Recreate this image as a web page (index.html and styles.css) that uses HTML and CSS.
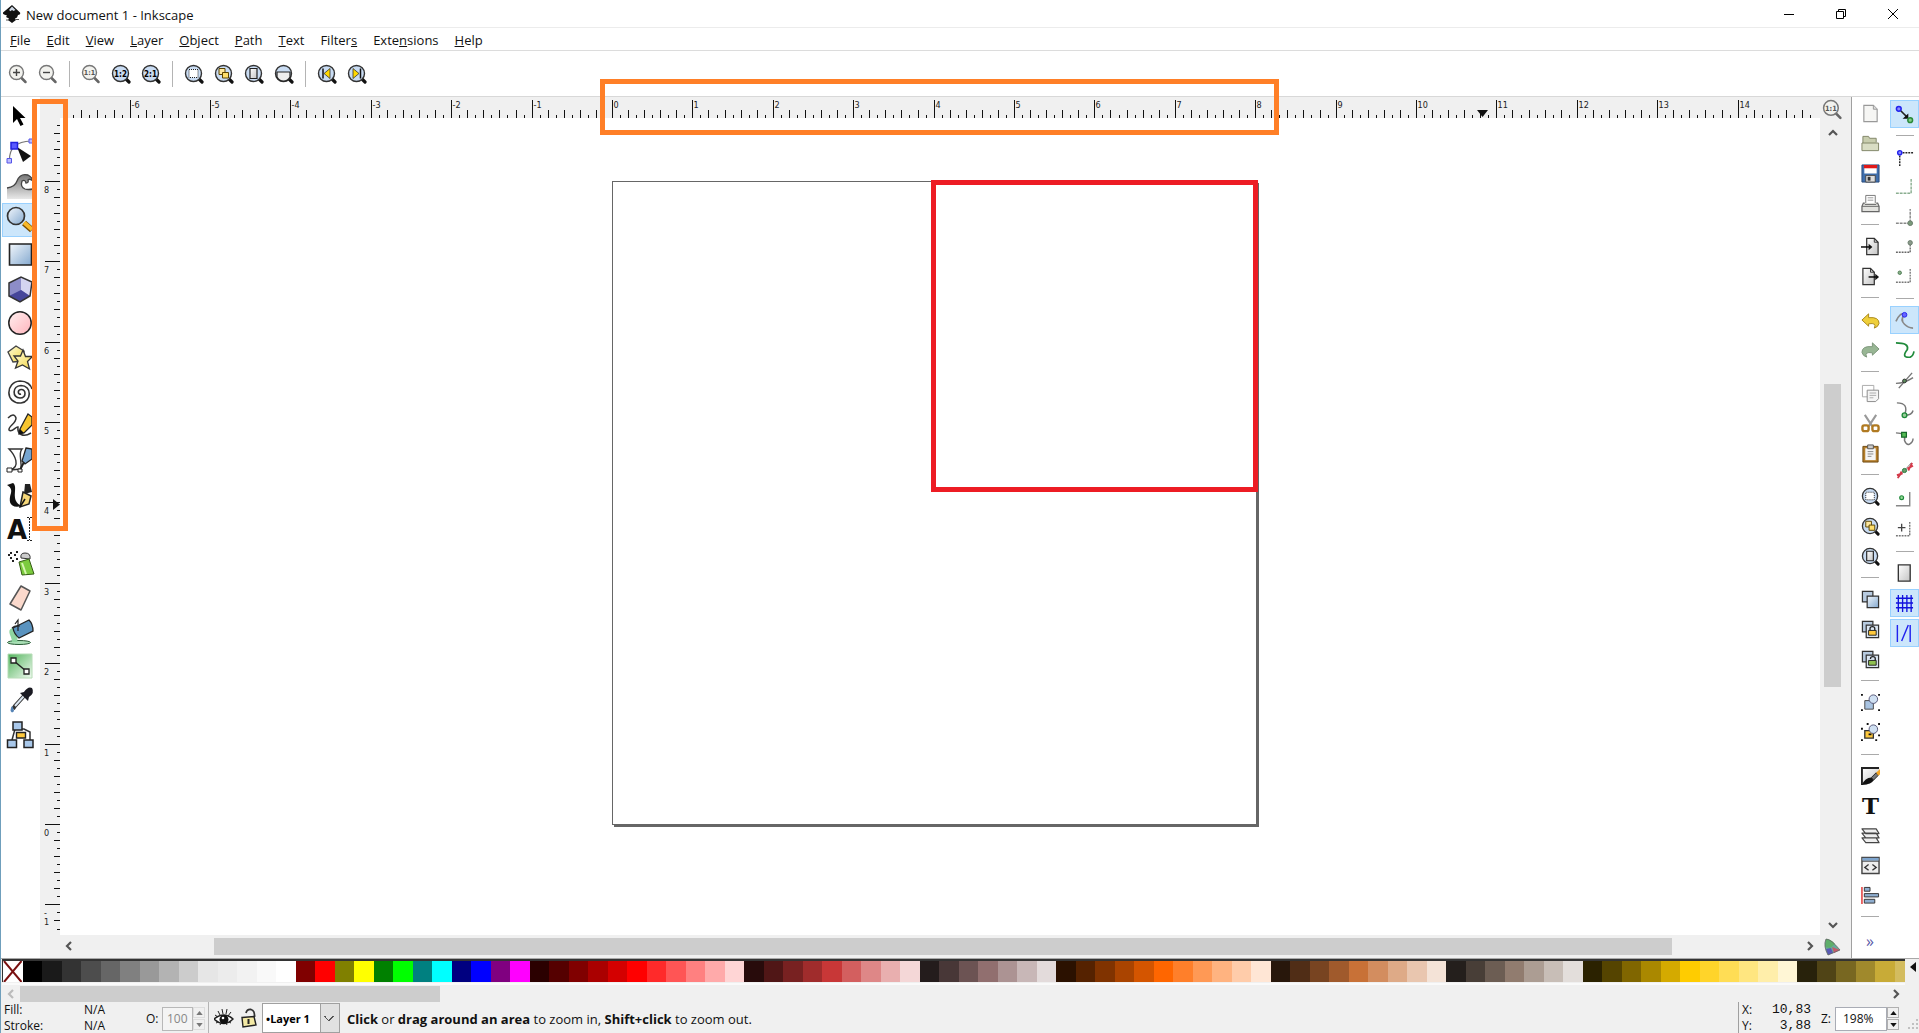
FILE: index.html
```
<!DOCTYPE html>
<html lang="en">
<head>
<meta charset="UTF-8">
<meta name="viewport" content="width=device-width, initial-scale=1.0">
<title>New document 1 - Inkscape</title>
<link rel="stylesheet" href="styles.css">
</head>
<body>

<!-- shared gradients and symbols -->
<svg class="defs" aria-hidden="true">
    <defs>
        <linearGradient id="blue" x1="0" y1="0" x2="1" y2="1"><stop offset="0" stop-color="#f2f7fc"/><stop offset="1" stop-color="#84a9cf"/></linearGradient>
        <linearGradient id="pink" x1="0" y1="0" x2="1" y2="1"><stop offset="0" stop-color="#fff0f0"/><stop offset="1" stop-color="#ffb4bc"/></linearGradient>
        <linearGradient id="yellow" x1="0" y1="0" x2="1" y2="1"><stop offset="0" stop-color="#fffbd8"/><stop offset="1" stop-color="#f2d84a"/></linearGradient>
        <linearGradient id="green" x1="0" y1="0" x2="1" y2="1"><stop offset="0" stop-color="#52b35c"/><stop offset="1" stop-color="#f0faf0"/></linearGradient>
        <linearGradient id="gray" x1="0" y1="0" x2="1" y2="1"><stop offset="0" stop-color="#ffffff"/><stop offset="1" stop-color="#c4c4c4"/></linearGradient>
        <linearGradient id="wave" x1="0" y1="0" x2="0" y2="1"><stop offset="0" stop-color="#777"/><stop offset="1" stop-color="#e8e8e8"/></linearGradient>
        <symbol id="lens" viewBox="0 0 20 20"><path d="M14 14l4 4" stroke="#111" stroke-width="3.2" stroke-linecap="round"/><circle cx="9.500" cy="9.500" r="8" fill="#c9dcf3" stroke="#333" stroke-width="1.400"/></symbol>
        <symbol id="lens-gray" viewBox="0 0 20 20"><path d="M13 13.500l4.500 4.500" stroke="#666" stroke-width="2.500" stroke-linecap="round"/><circle cx="8.500" cy="8.500" r="7" fill="#f2f2ee" stroke="#777" stroke-width="1.400"/></symbol>
        <symbol id="z-sel" viewBox="0 0 20 20"><use href="#lens"/><path d="M5 5.500h9v8h-9z" fill="#fff" stroke="#222" stroke-dasharray="1 1"/></symbol>
        <symbol id="z-draw" viewBox="0 0 20 20"><use href="#lens"/><path d="M5 4.500h6v6h-6z" fill="#ffe9a0" stroke="#5a4300"/><path d="M8.500 8.500h6v5.500h-6z" fill="#ffdf6b" stroke="#5a4300"/></symbol>
        <symbol id="z-page" viewBox="0 0 20 20"><use href="#lens"/><path d="M6 4.500h7v10h-7z" fill="url(#gray)" stroke="#222" stroke-width="1.200"/></symbol>
        <symbol id="z-width" viewBox="0 0 20 20"><use href="#lens"/><path d="M3 8h13v5q-2 4-6.500 4t-6.500-4z" fill="#eee" stroke="#222" stroke-width="1.200"/></symbol>
        <symbol id="chev" viewBox="0 0 10 10"><path d="M7 1L3 5l4 4" fill="none" stroke="currentColor" stroke-width="2.200"/></symbol>
    </defs>
</svg>

<div class="window">

    <header class="titlebar">
        <svg class="app-icon" viewBox="0 0 18 18"><path d="M9 0l8 7.500q1 2-2 2.500l-1 2.500-2 1 1 1.500-4 3-4-3 1-1.500-3-1.500 1-1.500-3-1q-2-1-1-2z" fill="#111"/><path d="M9 1.500l3.500 3.500-2 1-1.500-1-1.500 1.200-1.500-1.200z" fill="#cfd8e4"/><path d="M3 15h3M13 14.500h3" stroke="#555"/></svg>
        <span class="title">New document 1 - Inkscape</span>
        <div class="win-buttons">
            <button aria-label="Minimize"><svg viewBox="0 0 10 10"><path d="M0 5.500h10"/></svg></button>
            <button aria-label="Restore"><svg viewBox="0 0 10 10"><path d="M.5 2.500h7v7h-7zM2.500 2.500v-2h7v7h-2"/></svg></button>
            <button aria-label="Close"><svg viewBox="0 0 10 10"><path d="M0 0l10 10M10 0L0 10"/></svg></button>
        </div>
    </header>

    <nav class="menubar">
        <button><u>F</u>ile</button>
        <button><u>E</u>dit</button>
        <button><u>V</u>iew</button>
        <button><u>L</u>ayer</button>
        <button><u>O</u>bject</button>
        <button><u>P</u>ath</button>
        <button><u>T</u>ext</button>
        <button>Filter<u>s</u></button>
        <button>Exte<u>n</u>sions</button>
        <button><u>H</u>elp</button>
    </nav>

    <div class="toolbar">
        <button class="tb" aria-label="Zoom in"><svg viewBox="0 0 20 20"><use href="#lens-gray"/><path d="M5 8.500h7M8.500 5v7" stroke="#444" stroke-width="1.400"/></svg></button>
        <button class="tb" aria-label="Zoom out"><svg viewBox="0 0 20 20"><use href="#lens-gray"/><path d="M5 8.500h7" stroke="#444" stroke-width="1.400"/></svg></button>
        <i class="vsep"></i>
        <button class="tb" aria-label="Zoom 1:1"><svg viewBox="0 0 20 20"><use href="#lens-gray"/><text x="8.500" y="11">1:1</text></svg></button>
        <button class="tb" aria-label="Zoom 1:2"><svg viewBox="0 0 20 20"><use href="#lens"/><text class="dark" x="9.500" y="12.500">1:2</text></svg></button>
        <button class="tb" aria-label="Zoom 2:1"><svg viewBox="0 0 20 20"><use href="#lens"/><text class="dark" x="9.500" y="12.500">2:1</text></svg></button>
        <i class="vsep"></i>
        <button class="tb" aria-label="Zoom selection"><svg><use href="#z-sel"/></svg></button>
        <button class="tb" aria-label="Zoom drawing"><svg><use href="#z-draw"/></svg></button>
        <button class="tb" aria-label="Zoom page"><svg><use href="#z-page"/></svg></button>
        <button class="tb" aria-label="Zoom page width"><svg><use href="#z-width"/></svg></button>
        <i class="vsep"></i>
        <button class="tb" aria-label="Previous zoom"><svg viewBox="0 0 20 20"><use href="#lens"/><path d="M6 4.500v10" stroke="#111" stroke-width="1.500"/><path d="M13 4.500v10l-6-5z" fill="#ffd800" stroke="#333" stroke-width=".8"/></svg></button>
        <button class="tb" aria-label="Next zoom"><svg viewBox="0 0 20 20"><use href="#lens"/><path d="M13.500 4.500v10" stroke="#111" stroke-width="1.500"/><path d="M6 4.500v10l6-5z" fill="#ffd800" stroke="#333" stroke-width=".8"/></svg></button>
    </div>

    <div class="main">

        <div class="toolbox">
            <button aria-label="Select"><svg viewBox="0 0 26 26"><path d="M6 2v17l4-4 3.500 7 3-1.500-3.500-6.500h5.500z" fill="#000"/></svg></button>
            <button aria-label="Edit nodes"><svg viewBox="0 0 26 26"><path d="M2.500 22Q2 4 24 3" fill="none" stroke="#777" stroke-width="1.200"/><path d="M10 9l14 9-8 6z" fill="#111"/><path d="M4 4.500h6.500v6.500H4z" fill="#5a5aff" stroke="#2222dd" stroke-width="1.500"/><path d="M0 20.500h4.500v4.500H0zM22 1h4v4h-4z" fill="#bcbcff" stroke="#5555e8"/></svg></button>
            <button aria-label="Tweak"><svg viewBox="0 0 26 26"><path d="M0 15Q8 14 10 8q3-8 11-6 5 2 5 6-3-3-5-1 1 3-2 3-1-4-4-2-2 6 3 8 3 1 8 0v10H0z" fill="url(#wave)"/><path d="M0 15Q8 14 10 8q3-8 11-6 4 2 5 6-3-3-5-1 1 3-2 3-1-4-4-2-2 6 3 8 3 1 8 0" fill="none" stroke="#444" stroke-width="1.300"/></svg></button>
            <button class="on" aria-label="Zoom"><svg viewBox="0 0 26 26"><path d="M17 16l8 7" stroke="#7a4d00" stroke-width="6"/><path d="M17 15.500l8 7" stroke="#f9b928" stroke-width="4"/><circle cx="9" cy="9" r="8.500" fill="url(#blue)" stroke="#333" stroke-width="1.700"/></svg></button>
            <button aria-label="Rectangle"><svg viewBox="0 0 26 26"><path d="M2.500 3h22v21h-22z" fill="url(#blue)" stroke="#222" stroke-width="1.600"/></svg></button>
            <button aria-label="3D box"><svg viewBox="0 0 26 26"><path d="M2 7L14 1l11 5-2 14-10 6-11-6z" fill="#8d8dc8"/><path d="M14 1l11 5-2 14-9-6z" fill="#d4d4f0"/><path d="M2 20l12-6 9 6-10 6z" fill="#46469a"/><path d="M2 7L14 1l11 5-2 14-10 6-11-6z" fill="none" stroke="#333" stroke-width="1.500"/></svg></button>
            <button aria-label="Ellipse"><svg viewBox="0 0 26 26"><circle cx="13" cy="13" r="11.200" fill="url(#pink)" stroke="#222" stroke-width="1.500"/></svg></button>
            <button aria-label="Star"><svg viewBox="0 0 26 26"><path d="M1 8l8-6 8 5-2 10-9 1z" fill="url(#yellow)" stroke="#444" stroke-width="1.400"/><path d="M16 6l2.500 6.500h7l-5 5 2 7.500-7-4-7 3 2.500-7-4-5h6.500z" fill="url(#yellow)" stroke="#333" stroke-width="1.300"/></svg></button>
            <button aria-label="Spiral"><svg viewBox="0 0 26 26"><path d="M14 15c-3 1-4-4 0-4.500 5-.5 6 8-1 8.500C5 19 5 7 14 6.500c11 0 11 16 0 17.500C-2 25-2 3 13 2c7 0 11 4 12 8" fill="none" stroke="#333" stroke-width="1.600"/></svg></button>
            <button aria-label="Pencil"><svg viewBox="0 0 26 26"><path d="M1 5q6-6 8 0c0 6-8 8-7 12 3 3 7-4 9-3-1 7 5 11 13 6" fill="none" stroke="#333" stroke-width="1.500"/><path d="M21 1l4 3v8l-8 8-5 1 1-5z" fill="#f7c52e" stroke="#222" stroke-width="1.300"/><path d="M12 21l1-5 4 4z" fill="#111"/></svg></button>
            <button aria-label="Bezier"><svg viewBox="0 0 26 26"><path d="M3 23C14 20 8 8 2 2h13c-4 4 0 12-1 20z" fill="none" stroke="#333" stroke-width="1.400"/><path d="M19 1l6 1v10l-7 5-3-3z" fill="#76a5d0" stroke="#222" stroke-width="1.300"/><path d="M17 15l-4 8" stroke="#222" stroke-width="2"/><path d="M0 21h5v4H0zM11 22h4v3h-4z" fill="#fff" stroke="#222"/></svg></button>
            <button aria-label="Calligraphy"><svg viewBox="0 0 26 26"><path d="M0 3l6-2c6 4-4 18 9 23-12 3-14-4-11-13 1-4-1-6-4-8z" fill="#111"/><path d="M18 2h5l2 8-8 2z" fill="#222"/><path d="M16 10l8 4-2 8-9 3z" fill="#f6d879" stroke="#222" stroke-width="1.500"/><path d="M13 25l5-8" stroke="#111" stroke-width="1.500"/></svg></button>
            <button aria-label="Text"><svg viewBox="0 0 26 26"><text class="tool-a" x="10" y="23">A</text><path d="M20 1.500h5M22.500 2v22M20 24.500h5" stroke="#222" stroke-dasharray="2 1"/></svg></button>
            <button aria-label="Spray"><svg viewBox="0 0 26 26"><path d="M3 3h2M7 5h2M3 8h2M9 2h2M9 9h2M1 5h2M5 11h2" stroke="#222" stroke-width="2"/><path d="M14 8q-1-5 4-5 6 0 5 6z" fill="#ccc" stroke="#333"/><path d="M12 12l10-3 5 15-12 1z" fill="#7ccb3e" stroke="#355d15"/><path d="M15 13l4 11" stroke="#d6f5b0" stroke-width="2"/></svg></button>
            <button aria-label="Eraser"><svg viewBox="0 0 26 26"><path d="M14 1l9 5-9 19-11-6z" fill="#fbd9cc" stroke="#555" stroke-width="1.500" stroke-linejoin="round"/></svg></button>
            <button aria-label="Paint bucket"><svg viewBox="0 0 26 26"><ellipse cx="12" cy="23.500" rx="11.500" ry="2" fill="#a9dfb5" stroke="#2b5c38"/><path d="M5 9c-6 3 0 8 0 14h5c2-6-2-7 0-13z" fill="#8fd5a0"/><path d="M6 9l16-8q4 4 4 11l-14 7q-5-4-6-10z" fill="#5a93bf" stroke="#222" stroke-width="1.300"/><path d="M5 9q3-3 8-2M11 12V1l-3 4" fill="none" stroke="#222" stroke-width="1.200"/></svg></button>
            <button aria-label="Gradient"><svg viewBox="0 0 26 26"><path d="M1 1h24v24H1z" fill="url(#green)" stroke="#b6dcb6"/><path d="M7 8l12 10" stroke="#222" stroke-width="1.500"/><path d="M4 5h5v5H4zM17 16h5v5h-5z" fill="#fff" stroke="#222" stroke-width="1.300"/></svg></button>
            <button aria-label="Dropper"><svg viewBox="0 0 26 26"><path d="M17 9L8 19l-2 3" stroke="#333" stroke-width="4"/><path d="M17 9L8 19" stroke="#dce7f2" stroke-width="2"/><path d="M13 6l8 8 1-4q6-4 3-9-4-2-8 4z" fill="#1a1a22"/><path d="M5 19q-3 5 0 6.500 4-1 0-6.500z" fill="#5583b5"/></svg></button>
            <button aria-label="Connector"><svg viewBox="0 0 26 26"><path d="M5 18L8 7h9l6 3v8" fill="none" stroke="#333" stroke-width="1.500"/><path d="M6 0h9v8H6zM.5 18h9v7.500h-9zM17 18h9v7.500h-9z" fill="#a9c8ea" stroke="#222" stroke-width="1.500"/><path d="M9.500 10.500h9v5.500h-9z" fill="#ffc93c" stroke="#222" stroke-width="1.400"/></svg></button>
        </div>

        <div class="desk">
            <div class="corner"></div>
            <svg class="hruler" id="hruler"></svg>
            <button class="zoom-lock" aria-label="Zoom drawing when window is resized"><svg viewBox="0 0 20 20"><use href="#lens-gray"/><text x="8.500" y="11">1:1</text></svg></button>

            <svg class="vruler" id="vruler"></svg>
            <div class="canvas">
                <div class="page"></div>
                <div class="red-box"></div>
            </div>
            <div class="vscroll">
                <button aria-label="Scroll up"><svg class="up"><use href="#chev"/></svg></button>
                <div class="track"><div class="thumb"></div></div>
                <button aria-label="Scroll down"><svg class="down"><use href="#chev"/></svg></button>
            </div>

            <div class="corner"></div>
            <div class="hscroll canvas-scroll">
                <button aria-label="Scroll left"><svg><use href="#chev"/></svg></button>
                <div class="track"><div class="thumb"></div></div>
                <button aria-label="Scroll right"><svg class="right"><use href="#chev"/></svg></button>
            </div>
            <button class="cms" aria-label="Color management"><svg viewBox="0 0 18 18"><path d="M3 1Q8 1 17 12L5 17Q0 8 3 1z" fill="#6a9"/><path d="M3 1Q8 1 12 6L7 10 2 9z" fill="#5fae6a"/><path d="M9 9l8 3-6 3z" fill="#c55a6a"/><path d="M3 11l5-1 2 5-5 2z" fill="#5a5ab5"/><path d="M3 1Q8 1 17 12L5 17Q0 8 3 1z" fill="none" stroke="#666" stroke-width=".8"/></svg></button>
        </div>

        <div class="commands">
            <button aria-label="New"><svg viewBox="0 0 20 20"><path d="M3 1.500h10l4 4V18.500H3z" fill="#f6f6f4" stroke="#999" stroke-width="1.200"/><path d="M13 1.500v4h4" fill="#ddd" stroke="#999"/></svg></button>
            <button aria-label="Open"><svg viewBox="0 0 20 20"><path d="M2 16V2.500h6l1 2h7V9" fill="#c8cdae" stroke="#7f8466"/><path d="M1 9.500h17.500v8H1z" fill="#d9ddc4" stroke="#7f8466"/></svg></button>
            <button aria-label="Save"><svg viewBox="0 0 20 20"><path d="M1 1h18v18H1z" fill="#3f6fae" stroke="#27497a"/><path d="M3.500 1h13v9h-13z" fill="#fff"/><path d="M3 1h14v3.500H3z" fill="#e01818"/><path d="M5 12h10v7H5z" fill="#ddd" stroke="#444"/><path d="M7 13.500h3v4H7z" fill="#333"/></svg></button>
            <button aria-label="Print"><svg viewBox="0 0 20 20"><path d="M5 1.500h10v9H5z" fill="#fff" stroke="#777"/><path d="M7 4h6M7 6.500h6" stroke="#999"/><path d="M4 9.500h-1.500L1 13v5.500h18V13l-1.500-3.500H16" fill="#e2e2de" stroke="#666" stroke-width="1.300"/><path d="M1 13h18M4 11h12" stroke="#666"/></svg></button>
            <i class="hsep"></i>
            <button aria-label="Import"><svg viewBox="0 0 20 20"><path d="M6 1.500h8l4 4v13H6z" fill="url(#gray)" stroke="#333" stroke-width="1.300"/><path d="M14 1.500v4h4" fill="none" stroke="#333"/><path d="M0 10.500h9" stroke="#000" stroke-width="1.500"/><path d="M8 7l4 3.500L8 14z"/></svg></button>
            <button aria-label="Export"><svg viewBox="0 0 20 20"><path d="M2 1.500h8l4 4v13H2z" fill="url(#gray)" stroke="#333" stroke-width="1.300"/><path d="M10 1.500v4h4" fill="none" stroke="#333"/><path d="M8 10.500h9" stroke="#000" stroke-width="1.500"/><path d="M15 7l4 3.500-4 3.500z"/></svg></button>
            <i class="hsep"></i>
            <button aria-label="Undo"><svg viewBox="0 0 20 20"><path d="M1 9.500L8 3v4q11-1 11 6-1 4-5 5 3-6-6-4.500V16z" fill="#efcf3a" stroke="#a8861a"/></svg></button>
            <button aria-label="Redo"><svg viewBox="0 0 20 20"><path d="M19 9.500L12 3v4Q1 6 1 13q1 4 5 5-3-6 6-4.500V16z" fill="#98b694" stroke="#7c967a"/></svg></button>
            <i class="hsep"></i>
            <button aria-label="Copy"><svg viewBox="0 0 20 20"><path d="M1.500 1.500h12v12h-12z" fill="#fff" stroke="#aaa"/><path d="M6.500 6.500h12v9l-3 3h-9z" fill="#f4f4f4" stroke="#888"/><path d="M9 9.500h7M9 12h7M9 14.500h4" stroke="#aaa"/></svg></button>
            <button aria-label="Cut"><svg viewBox="0 0 20 20"><path d="M4 1l8 12M16 1L8 13" stroke="#999" stroke-width="2.200"/><rect x="1.500" y="12" width="6.500" height="6" rx="2" fill="#fff" stroke="#b07a22" stroke-width="2.500"/><rect x="12" y="12" width="6.500" height="6" rx="2" fill="#fff" stroke="#b07a22" stroke-width="2.500"/></svg></button>
            <button aria-label="Paste"><svg viewBox="0 0 20 20"><path d="M2 2.500h16v16.500H2z" fill="#b57e2a" stroke="#6e4a12"/><path d="M4.500 4.500h11v12.500h-11z" fill="#f5f5f5"/><path d="M7 1h6v4H7z" fill="#ccc" stroke="#555"/><path d="M7 8h6M7 10.500h6M7 13h4" stroke="#888"/></svg></button>
            <i class="hsep"></i>
            <button aria-label="Zoom selection"><svg><use href="#z-sel"/></svg></button>
            <button aria-label="Zoom drawing"><svg><use href="#z-draw"/></svg></button>
            <button aria-label="Zoom page"><svg><use href="#z-page"/></svg></button>
            <i class="hsep"></i>
            <button aria-label="Duplicate"><svg viewBox="0 0 20 20"><path d="M1.500 1.500h11v11h-11z" fill="#b8cbe0" stroke="#333" stroke-width="1.300"/><path d="M6.500 6.500h12v12h-12z" fill="url(#blue)" stroke="#333" stroke-width="1.300"/></svg></button>
            <button aria-label="Clone"><svg viewBox="0 0 20 20"><path d="M1.500 1.500h11v11h-11z" fill="#b8cbe0" stroke="#333" stroke-width="1.300"/><path d="M5.500 5.500h13v13h-13z" fill="#dbe6f2" stroke="#333" stroke-width="1.300"/><path d="M9.500 11V9q0-2 2.500-2t2.500 2v2" fill="none" stroke="#222" stroke-width="1.400"/><path d="M8 11h8v5H8z" fill="#ffc93c" stroke="#222"/></svg></button>
            <button aria-label="Unlink clone"><svg viewBox="0 0 20 20"><path d="M1.500 1.500h11v11h-11z" fill="#b8cbe0" stroke="#333" stroke-width="1.300"/><path d="M5.500 5.500h13v13h-13z" fill="#dbe6f2" stroke="#333" stroke-width="1.300"/><path d="M10 9.500V9q0-2 2.500-2t2.500 2v2" fill="none" stroke="#222" stroke-width="1.400"/><path d="M8 11h8v5H8z" fill="#8fc050" stroke="#222"/></svg></button>
            <i class="hsep"></i>
            <button aria-label="Group"><svg viewBox="0 0 20 20"><path d="M4 8h9v9H4z" fill="#a9c4e2" stroke="#444"/><circle cx="13" cy="6.500" r="4.500" fill="#cfe0f2" stroke="#557"/><path d="M0 1h2v2H0zM18 1h2v2h-2zM0 17h2v2H0zM18 17h2v2h-2z"/></svg></button>
            <button aria-label="Ungroup"><svg viewBox="0 0 20 20"><path d="M4 8h9v8H4z" fill="#ffc93c" stroke="#333" stroke-width="1.400"/><circle cx="13" cy="6.500" r="4.500" fill="#cfe0f2" stroke="#557"/><path d="M6 0h2v2H6zM18 0h2v2h-2zM0 5h2v2H0zM0 17h2v2H0zM15 17h2v2h-2zM18 12h2v2h-2zM8 11h3v2H8z"/></svg></button>
            <i class="hsep"></i>
            <button aria-label="Fill and stroke"><svg viewBox="0 0 20 20"><path d="M1 1h18v5L6 19H1z" fill="url(#gray)"/><path d="M1 19V1h18" fill="none" stroke="#222" stroke-width="2"/><path d="M1 19q3-8 10-8l3 2q-3 6-13 6z" fill="#111"/><path d="M11 11l5-5 2 3-5 5z" fill="#777" stroke="#222"/><path d="M16 6l4-4v6l-2 1z" fill="#f5a623"/></svg></button>
            <button aria-label="Text and font"><svg viewBox="0 0 20 20"><text class="cmd-t" x="10" y="18">T</text></svg></button>
            <button aria-label="Layers"><svg viewBox="0 0 20 20"><path d="M1 12.500l4 5h14l-3-5zM1 7.500l4 5h14l-3-5zM1 3l4 5h14l-3-5z" fill="#eee" stroke="#444" stroke-width="1.200" stroke-linejoin="round"/></svg></button>
            <button aria-label="XML editor"><svg viewBox="0 0 20 20"><path d="M1 1.500h18v17H1z" fill="#eee" stroke="#444" stroke-width="1.500"/><path d="M1.500 2h17v3h-17z" fill="#7fa6cf"/><path d="M1 5.500h18" stroke="#444"/><path d="M8 9l-4 3 4 3M12 9l4 3-4 3" fill="none" stroke="#333" stroke-width="1.400"/></svg></button>
            <button aria-label="Align"><svg viewBox="0 0 20 20"><path d="M1 1v18" stroke="#e03030" stroke-width="1.500"/><path d="M3.500 1.500h6v4h-6zM3.500 8h15v3.500h-15zM3.500 14h11v4h-11z" fill="#8faed0" stroke="#333"/></svg></button>
            <i class="hsep"></i>
            <button class="more" aria-label="More commands">»</button>
        </div>

        <div class="snap">
            <button class="on" aria-label="Enable snapping"><svg viewBox="0 0 20 20"><path d="M5 5l8 8" stroke="#222" stroke-width="1.600"/><path d="M14 9v5.500H8z"/><circle cx="4" cy="4" r="2.500" fill="#88f" stroke="#22e" stroke-width="1.600"/><circle cx="16" cy="16" r="2.500" fill="#8c8" stroke="#2a8a3a" stroke-width="1.600"/></svg></button>
            <i class="hsep"></i>
            <button aria-label="Snap bounding boxes"><svg viewBox="0 0 20 20"><path d="M5 5h14M5 5v14" stroke="#222" stroke-width="1.500" stroke-dasharray="2 1"/><circle cx="5" cy="5" r="2.200" fill="#88f" stroke="#22e" stroke-width="1.500"/></svg></button>
            <button aria-label="Snap to edges"><svg viewBox="0 0 20 20"><path d="M1 16h16V1" fill="none" stroke="#8aae90" stroke-width="1.500" stroke-dasharray="3 1"/></svg></button>
            <button aria-label="Snap to corners"><svg viewBox="0 0 20 20"><path d="M1 16h15V1" fill="none" stroke="#888" stroke-width="1.500" stroke-dasharray="3 1"/><circle cx="16" cy="16" r="2.500" fill="#7a9a7a" stroke="#687a6a"/></svg></button>
            <button aria-label="Snap to edge midpoints"><svg viewBox="0 0 20 20"><path d="M1 15h15V5" fill="none" stroke="#666" stroke-width="1.400" stroke-dasharray="2 1"/><circle cx="16" cy="5" r="2.300" fill="#8a9a8a" stroke="#687a6a"/></svg></button>
            <button aria-label="Snap to centers"><svg viewBox="0 0 20 20"><path d="M1 15h15V1" fill="none" stroke="#777" stroke-width="1.400" stroke-dasharray="2 1"/><circle cx="5" cy="5" r="1.800" fill="#8ab08a" stroke="#4b7a50"/></svg></button>
            <i class="hsep"></i>
            <button class="on" aria-label="Snap nodes"><svg viewBox="0 0 20 20"><path d="M1 11q5-11 9-7-5 5 0 10 4 4 9 4" fill="none" stroke="#888" stroke-width="1.700"/><circle cx="10" cy="4" r="2.500" fill="#66f" stroke="#22e"/></svg></button>
            <button aria-label="Snap to paths"><svg viewBox="0 0 20 20"><path d="M1 2q14 0 12 7-7 9 3 8 3-1 4-6" fill="none" stroke="#1f8a3a" stroke-width="1.800"/></svg></button>
            <button aria-label="Snap to intersections"><svg viewBox="0 0 20 20"><path d="M1 13q9 0 18-6M4 18L18 2" stroke="#777" fill="none" stroke-width="1.500"/><circle cx="10" cy="10.500" r="2" fill="#5a8a5a" stroke="#333"/></svg></button>
            <button aria-label="Snap to cusp nodes"><svg viewBox="0 0 20 20"><path d="M2 2q13 0 8 13 8 0 9-5" fill="none" stroke="#777" stroke-width="1.500"/><circle cx="10" cy="15" r="2.500" fill="#9c9" stroke="#1f8a3a" stroke-width="1.400"/></svg></button>
            <button aria-label="Snap to smooth nodes"><svg viewBox="0 0 20 20"><path d="M1 2q11 0 9 8 2 5 5 4 4-2 4-6" fill="none" stroke="#777" stroke-width="1.500"/><path d="M7 1.500h5v5H7z" fill="#5b5" stroke="#176a2a" stroke-width="1.300"/></svg></button>
            <button aria-label="Snap to line midpoints"><svg viewBox="0 0 20 20"><path d="M3 18L17 2" stroke="#888"/><path d="M2 15l6-2M3 18l4-7M13 8l6-3M14 10l4-8" stroke="#d43a4a" stroke-width="2"/><circle cx="10" cy="10" r="2.200" fill="#6a9a6a" stroke="#1f7a3a"/></svg></button>
            <button aria-label="Snap to object midpoints"><svg viewBox="0 0 20 20"><path d="M1 15.500h14.500V1" fill="none" stroke="#888" stroke-width="1.500"/><circle cx="7" cy="7" r="2" fill="#9d9" stroke="#1f8a3a" stroke-width="1.300"/></svg></button>
            <button aria-label="Snap to rotation centers"><svg viewBox="0 0 20 20"><path d="M1 15.500h14.500V1" fill="none" stroke="#777" stroke-width="1.500" stroke-dasharray="2 1"/><path d="M3 7h8M7 3v8" stroke="#444" stroke-width="1.400"/></svg></button>
            <i class="hsep"></i>
            <button aria-label="Snap to page border"><svg viewBox="0 0 20 20"><path d="M3.500 1h12.500v17H3.500z" fill="url(#gray)" stroke="#333" stroke-width="1.400"/></svg></button>
            <button class="on" aria-label="Snap to grids"><svg viewBox="0 0 20 20"><path d="M1 4.500h18M1 9.500h18M1 14.500h18M3.500 1v18M8 1v18M12.500 1v18M17 1v18" stroke="#11d" stroke-width="1.400"/></svg></button>
            <button class="on" aria-label="Snap to guides"><svg viewBox="0 0 20 20"><path d="M2.500 1v18M16 1v18M14 1L7 18" stroke="#22e" stroke-width="1.500"/></svg></button>
        </div>
    </div>

    <div class="palette">
        <div class="palette-body">
            <div class="swatches" id="swatches">
                <button class="swatch none" aria-label="None"><svg viewBox="0 0 20 20" preserveAspectRatio="none"><path d="M1 0l18 20M19 0L1 20"/></svg></button>
            </div>
            <div class="hscroll palette-scroll">
                <button class="off" aria-label="Scroll left"><svg><use href="#chev"/></svg></button>
                <div class="track"><div class="thumb"></div></div>
                <button aria-label="Scroll right"><svg class="right"><use href="#chev"/></svg></button>
            </div>
        </div>
        <button class="palette-menu" aria-label="Palette menu"><svg viewBox="0 0 6 10"><path d="M6 0v10L0 5z"/></svg></button>
    </div>

    <footer class="statusbar">
        <div class="style-info">
            <span>Fill:</span><span>N/A</span>
            <span>Stroke:</span><span>N/A</span>
        </div>
        <label class="opacity" for="opacity">O:</label>
        <input class="num disabled" id="opacity" type="text" value="100" disabled>
        <div class="spin disabled">
            <button disabled aria-label="Increase opacity"><svg viewBox="0 0 8 5"><path d="M0 5l4-5 4 5z"/></svg></button>
            <button disabled aria-label="Decrease opacity"><svg viewBox="0 0 8 5"><path d="M0 0l4 5 4-5z"/></svg></button>
        </div>
        <div class="layer-box">
            <button aria-label="Toggle layer visibility"><svg viewBox="0 0 20 20"><path d="M0 11q10-8 19 0-9 9-19 0z" fill="#fff" stroke="#222" stroke-width="1.500"/><circle cx="10" cy="11.500" r="4.500" fill="#111"/><circle cx="9" cy="10" r="1.300" fill="#fff"/><path d="M1 7l3 2M4 3l2 4M8 1l1 5M13 1l-1 5M17 4l-3 4M2 15l2-1M17 15l-2-1M6 17l1-2M13 17l-1-2" stroke="#222"/></svg></button>
            <button aria-label="Toggle layer lock"><svg viewBox="0 0 20 20"><path d="M7 5q1-4 5-3.500 4 1 3.500 7.500" fill="none" stroke="#333" stroke-width="1.800"/><path d="M3 9.500l12-1 2 8.500-13 2z" fill="#f3e9a4" stroke="#222" stroke-width="1.400"/><path d="M9.500 11v5" stroke="#222" stroke-width="2"/></svg></button>
            <select aria-label="Current layer"><option>•Layer 1</option></select>
        </div>
        <p class="message"><b>Click</b> or <b>drag around an area</b> to zoom in, <b>Shift+click</b> to zoom out.</p>
        <div class="coords">
            <span>X:</span><span class="mono">10,83</span>
            <span>Y:</span><span class="mono">3,88</span>
        </div>
        <label class="zoom-label" for="zoom">Z:</label>
        <input class="num zoom" id="zoom" type="text" value="198%">
        <div class="spin">
            <button aria-label="Zoom up"><svg viewBox="0 0 8 5"><path d="M0 5l4-5 4 5z"/></svg></button>
            <button aria-label="Zoom down"><svg viewBox="0 0 8 5"><path d="M0 0l4 5 4-5z"/></svg></button>
        </div>
        <svg class="grip" viewBox="0 0 10 10"><path d="M8 0h2v2H8zM4 4h2v2H4zM8 4h2v2H8zM0 8h2v2H0zM4 8h2v2H4zM8 8h2v2H8z"/></svg>
    </footer>

    <div class="mark mark-top"></div>
    <div class="mark mark-left"></div>
</div>

<script src="script.js"></script>
</body>
</html>
```
FILE: styles.css
```
* {
    box-sizing: border-box;
}
body {
    margin: 0;
    font-family: "Open Sans", "Noto Sans", sans-serif;
    font-size: 12px;
    line-height: 16px;
    color: #111;
    background-color: #fff;
}
button {
    display: flex;
    align-items: center;
    justify-content: center;
    margin: 0;
    padding: 0;
    border: none;
    background: none;
    font: inherit;
    color: inherit;
}
svg {
    display: block;
    fill: #111;
}
.defs {
    position: absolute;
    width: 0;
    height: 0;
}
.window {
    position: relative;
    display: flex;
    flex-direction: column;
    height: 100vh;
    overflow: hidden;
    border-left: 1px solid #6f9fbc;
}

/* title, menu, toolbar */
.titlebar {
    display: flex;
    align-items: center;
    height: 27px;
    padding-left: 2px;
}
.app-icon {
    width: 18px;
    height: 18px;
    margin-right: 5px;
}
.title {
    flex: 1;
    padding-top: 2px;
    font-size: 13px;
}
.win-buttons {
    display: flex;
    height: 24px;
}
.win-buttons button {
    width: 52px;
}
.win-buttons svg {
    width: 10px;
    height: 10px;
    fill: none;
    stroke: #000;
}
.menubar {
    display: flex;
    gap: 16px;
    height: 24px;
    padding-top: 2px;
    padding-left: 9px;
    border-top: 1px solid #ececec;
    border-bottom: 1px solid #dcdcdc;
    font-size: 13px;
}
.menubar button {
    display: block;
}
.toolbar {
    display: flex;
    align-items: center;
    height: 45px;
    padding-left: 2px;
}
.tb {
    width: 30px;
    height: 30px;
}
.tb svg {
    width: 20px;
    height: 20px;
}
.zoom-lock svg {
    width: 21px;
    height: 21px;
}
.tb text,
.zoom-lock text {
    font: bold 7px "DejaVu Sans Condensed", sans-serif;
    text-anchor: middle;
    fill: #555;
}
.tb text.dark {
    font-size: 8px;
    fill: #000;
}
.vsep {
    width: 1px;
    height: 26px;
    margin: 0 6px;
    background-color: #b4b4b4;
}

/* main area */
.main {
    display: flex;
    flex: 1;
    min-height: 0;
    border-top: 1px solid #d8d8d8;
}
.toolbox {
    display: flex;
    flex-direction: column;
    width: 39px;
    height: 655px;
    padding: 3px 3px 0 1px;
}
.toolbox button {
    flex: 1;
    border: 1px solid transparent;
}
.toolbox svg {
    width: 26px;
    height: 26px;
    overflow: visible;
}
.toolbox .on,
.snap .on {
    border: 1px solid #99d1ff;
    background-color: #cce6fb;
}
.tool-a {
    font: bold 26px "DejaVu Sans", sans-serif;
    text-anchor: middle;
}
.desk {
    display: grid;
    flex: 1;
    grid-template-columns: 20px 1fr 31px;
    grid-template-rows: 21px 1fr 23px;
    border-right: 1px solid #a0a0a0;
    background-color: #f0f0f0;
}
.hruler,
.vruler {
    width: 100%;
    height: 100%;
}
.hruler text,
.vruler text {
    font: 9px "DejaVu Sans Condensed", sans-serif;
    fill: #222;
}
.hruler line,
.vruler line {
    stroke: #111;
    shape-rendering: crispEdges;
}
.zoom-lock {
    padding-top: 4px;
    padding-right: 6px;
}
.canvas {
    position: relative;
    overflow: hidden;
    background-color: #fff;
}
.page {
    position: absolute;
    left: 552px;
    top: 63px;
    width: 645px;
    height: 644px;
    border: 1px solid #666;
    box-shadow: 2px 2px 0 #666;
}
.red-box {
    position: absolute;
    left: 871px;
    top: 62px;
    width: 327px;
    height: 312px;
    border: 5px solid #ed1c24;
}
.vscroll {
    display: flex;
    flex-direction: column;
    width: 21px;
    margin: 6px 0 2px;
    padding-left: 4px;
}
.vscroll button {
    height: 17px;
}
.vscroll .track {
    flex: 1;
}
.vscroll .thumb {
    position: relative;
    top: 31.4%;
    width: 17px;
    height: 39%;
    background-color: #cdcdcd;
}
.vscroll svg,
.hscroll svg {
    width: 10px;
    height: 10px;
    color: #555;
}
.vscroll .up {
    transform: rotate(90deg);
}
.vscroll .down {
    transform: rotate(-90deg);
}
.hscroll .right {
    transform: rotate(180deg);
}
.hscroll {
    display: flex;
    align-items: center;
    height: 20px;
}
.canvas-scroll {
    height: 22px;
    padding-right: 1px;
}
.hscroll button {
    width: 18px;
    height: 17px;
}
.hscroll .track {
    flex: 1;
}
.hscroll .thumb {
    width: 84.6%;
    height: 17px;
    margin-left: 7.9%;
    background-color: #cdcdcd;
}
.cms {
    height: 23px;
    padding-right: 7px;
}
.cms svg {
    width: 18px;
    height: 18px;
}

/* commands and snap bars */
.commands,
.snap {
    display: flex;
    flex-direction: column;
    align-items: center;
    padding-top: 2px;
}
.commands {
    width: 38px;
    padding-right: 2px;
}
.snap {
    width: 29px;
}
.commands button,
.snap button {
    width: 29px;
    height: 28px;
    margin: 1px 0;
}
.commands svg,
.snap svg {
    width: 19px;
    height: 19px;
    overflow: visible;
}
.hsep {
    width: 18px;
    height: 1px;
    margin: 6px 0;
    background-color: #aaa;
}
.commands .hsep {
    margin-bottom: 7px;
}
.cmd-t {
    font: bold 24px "DejaVu Serif", serif;
    text-anchor: middle;
}
.commands .more {
    height: 32px;
    font-size: 16px;
    color: #5a5aa8;
}

/* palette */
.palette {
    display: flex;
    height: 44px;
    padding-left: 1px;
    background-color: #f0f0f0;
    border-top: 1px solid #a8a8a8;
}
.palette-body {
    flex: 1;
    border-top: 2px solid #333;
}
.swatches {
    display: flex;
    height: 21px;
}
.swatch {
    flex: 1 1 0;
    min-width: 0;
}
.swatch:last-child {
    flex-grow: 0.55;
}
.none {
    background-color: #fff;
    border-left: 1px solid #333;
}
.none svg {
    width: 100%;
    height: 100%;
    fill: none;
    stroke: #7a1010;
    stroke-width: 2px;
}
.palette-scroll {
    height: 19px;
    margin-top: 1px;
    border-top: 2px solid #fafafa;
}
.palette-scroll .thumb {
    width: 22.5%;
    height: 16px;
    margin-left: 0;
}
.palette-scroll .off svg {
    color: #bbb;
}
.palette-menu {
    width: 14px;
    height: 16px;
    padding-left: 2px;
}
.palette-menu svg {
    width: 6px;
    height: 10px;
}

/* status bar */
.statusbar {
    display: flex;
    align-items: center;
    height: 31px;
    padding-left: 3px;
    background-color: #f0f0f0;
}
.style-info {
    display: grid;
    grid-template-columns: 80px 62px;
    height: 31px;
}
.opacity {
    width: 16px;
    padding-top: 2px;
}
.num {
    width: 31px;
    height: 24px;
    margin-top: 2px;
    padding: 0 0 0 4px;
    border: 1px solid #a9acb5;
    background-color: #fff;
    font: inherit;
    color: #111;
}
.num.disabled {
    background-color: #f4f4f4;
    border-color: #b8b8b8;
    color: #888;
}
.num.zoom {
    width: 52px;
    padding-left: 7px;
}
.spin {
    display: flex;
    flex-direction: column;
    gap: 1px;
    width: 12px;
    margin: 2px 3px 0 0;
}
.spin button {
    height: 11px;
    border: 1px solid #b0b0b0;
}
.spin.disabled button {
    border-color: #ddd;
}
.spin svg {
    width: 7px;
    height: 4px;
}
.spin.disabled svg {
    fill: #777;
}
.layer-box {
    display: flex;
    align-items: center;
    gap: 5px;
    height: 31px;
    padding-left: 5px;
    border-left: 1px solid #b4b4b4;
}
.layer-box svg {
    width: 20px;
    height: 20px;
}
.layer-box select {
    width: 78px;
    height: 30px;
    margin-top: 1px;
    margin-left: -2px;
    padding: 0 0 0 3px;
    appearance: none;
    border: 1px solid #a0a0a0;
    border-radius: 0;
    background: linear-gradient(#a0a0a0, #a0a0a0) right 18px top / 1px 100% no-repeat, linear-gradient(45deg, transparent 46%, #555 46%, #555 60%, transparent 60%) right 10px center / 5px 5px no-repeat, linear-gradient(-45deg, transparent 46%, #555 46%, #555 60%, transparent 60%) right 5px center / 5px 5px no-repeat, linear-gradient(#e1e1e1, #e1e1e1) right top / 18px 100% no-repeat, #fff;
    font: bold 11px "Open Sans", sans-serif;
    color: #000;
}
.message {
    flex: 1;
    margin: 0;
    padding: 2px 0 0 7px;
    font-size: 13px;
}
.coords {
    display: grid;
    grid-template-columns: 20px 49px;
    width: 83px;
    height: 31px;
    padding-left: 3px;
    border-left: 1px solid #a0a0a0;
}
.mono {
    font-family: "Liberation Mono", monospace;
    font-size: 13px;
    text-align: right;
}
.zoom-label {
    width: 14px;
    padding-top: 2px;
}
.grip {
    width: 10px;
    height: 10px;
    margin: 12px 1px 0 6px;
    fill: #c0c0c0;
}

/* highlighted ruler ranges */
.mark {
    position: absolute;
    border: 5px solid #ff7f27;
    pointer-events: none;
}
.mark-top {
    left: 599px;
    top: 79px;
    width: 679px;
    height: 56px;
}
.mark-left {
    left: 31px;
    top: 99px;
    width: 36px;
    height: 432px;
}
```
FILE: script.js
```
var SVG = 'http://www.w3.org/2000/svg';
var UNIT = 80.4; // pixels per ruler unit

function add(parent, name, attrs, text) {
    var el = document.createElementNS(SVG, name);
    for (var key in attrs) {
        el.setAttribute(key, attrs[key]);
    }
    if (text) {
        el.textContent = text;
    }
    parent.appendChild(el);
}

// Tick length depends on the tenth: whole units, even tenths, odd tenths
function tickLength(i, major) {
    if (i % 10 === 0) return major;
    return i % 2 === 0 ? major / 2 - 1 : 3;
}

function drawHorizontal() {
    var ruler = document.getElementById('hruler');
    for (var i = -67; i <= 149; i++) {
        var x = Math.round(552 + i * UNIT / 10) + 0.5;
        add(ruler, 'line', {x1: x, x2: x, y1: 21 - tickLength(i, 18), y2: 21});
        if (i % 10 === 0) {
            add(ruler, 'text', {x: x + 1, y: 11}, String(i / 10));
        }
    }
    add(ruler, 'path', {d: 'M1417 13h11l-5.500 7z'});
}

function drawVertical() {
    var ruler = document.getElementById('vruler');
    for (var i = -13; i <= 87; i++) {
        var y = Math.round(706 - i * UNIT / 10) + 0.5;
        add(ruler, 'line', {x1: 20 - tickLength(i, 15), x2: 20, y1: y, y2: y});
        if (i % 10 === 0) {
            // digits are stacked, one per line
            String(i / 10).split('').forEach(function(ch, n) {
                add(ruler, 'text', {x: 4, y: y + 11 + n * 9}, ch);
            });
        }
    }
    add(ruler, 'path', {d: 'M13 381v11l7-5.500z'});
}

var colors = [
    '000000 1a1a1a 333333 4d4d4d 666666 808080 999999 b3b3b3 cccccc e6e6e6 ececec f2f2f2 f9f9f9 ffffff',
    '800000 ff0000 808000 ffff00 008000 00ff00 008080 00ffff 000080 0000ff 800080 ff00ff',
    '2b0000 550000 800000 aa0000 d40000 ff0000 ff2a2a ff5555 ff8080 ffaaaa ffd5d5',
    '280b0b 501616 782121 a02c2c c83737 d35f5f de8787 e9afaf f4d7d7',
    '241c1c 483737 6c5353 916f6f ac9393 c8b7b7 e3dbdb',
    '2b1100 552200 803300 aa4400 d45500 ff6600 ff7f2a ff9955 ffb380 ffccaa ffe6d5',
    '28170b 502d16 784421 a05a2c c87137 d38d5f deaa87 e9c6af f4e3d7',
    '241f1c 483e37 6c5d53 917c6f ac9d93 c8beb7 e3dedb',
    '2b2200 554400 806600 aa8800 d4aa00 ffcc00 ffd42a ffdd55 ffe680 ffeeaa fff6d5',
    '28220b 504416 786721 a0892c c8ab37 d3bc5f'
];

function drawPalette() {
    var box = document.getElementById('swatches');
    colors.join(' ').split(' ').forEach(function(color) {
        var swatch = document.createElement('button');
        swatch.className = 'swatch';
        swatch.style.backgroundColor = '#' + color;
        swatch.setAttribute('aria-label', '#' + color);
        box.appendChild(swatch);
    });
}

drawHorizontal();
drawVertical();
drawPalette();
```
